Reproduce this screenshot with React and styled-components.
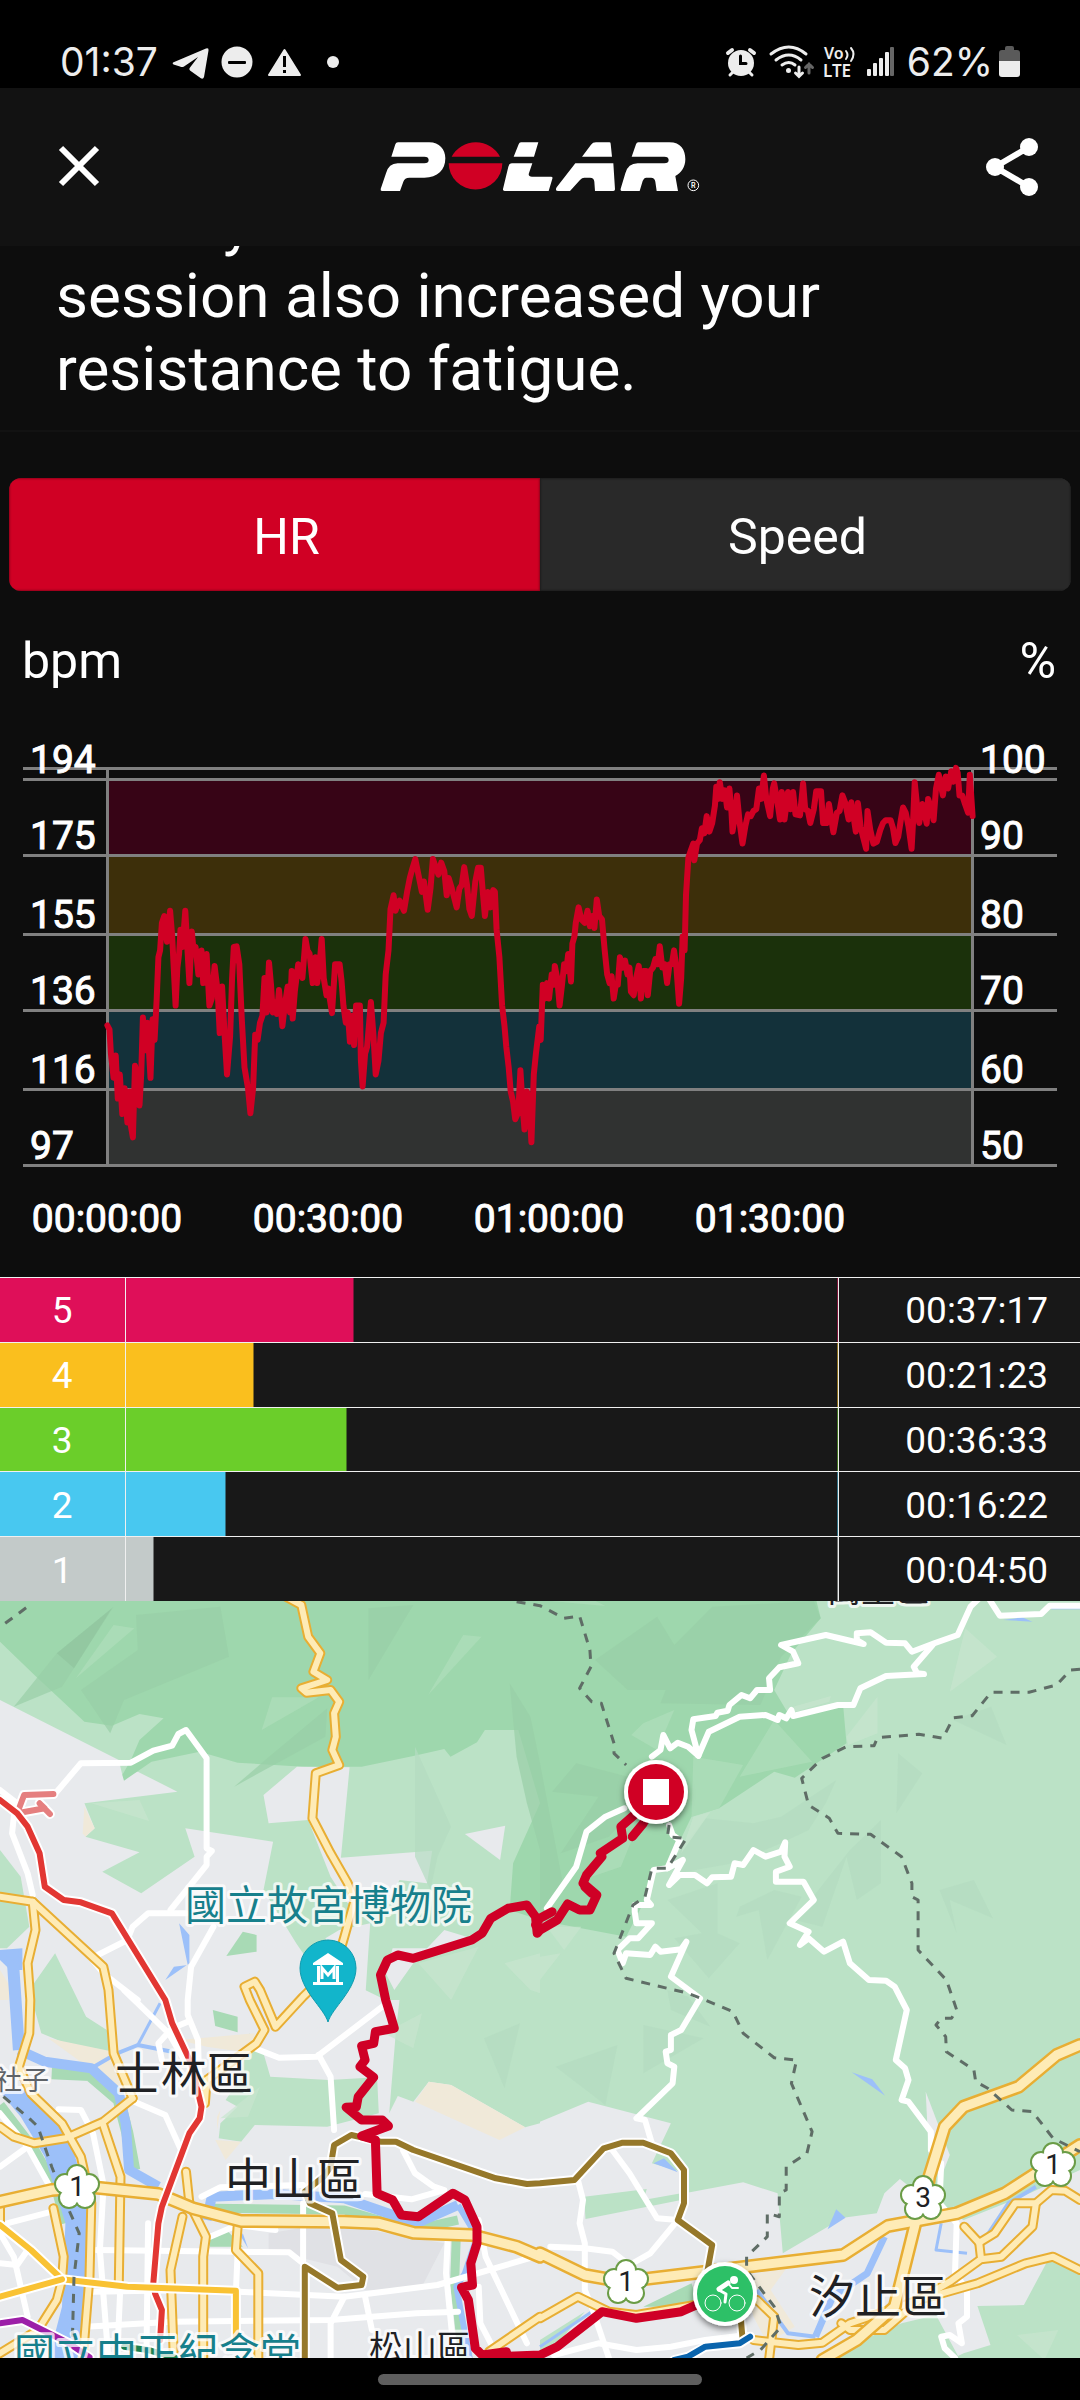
import React, { useState } from "react";
import styled, { createGlobalStyle } from "styled-components";

const GlobalStyle = createGlobalStyle`
  * { box-sizing: border-box; }
  body {
    margin: 0;
    background: #000;
    color: #fff;
    font-family: Roboto, "Noto Sans CJK TC", sans-serif;
  }
  button { font: inherit; color: inherit; border: 0; background: none; cursor: pointer; }
`;

const Screen = styled.main`
  display: flex;
  flex-direction: column;
  min-height: 100vh;
  background: #0d0d0d;
`;

/* ---------- status bar ---------- */

const StatusBar = styled.div`
  display: flex;
  align-items: flex-end;
  justify-content: space-between;
  height: 88px;
  padding: 0 60px 6px;
  background: #000;
  color: #ededed;
  font-family: Inter, sans-serif;
  font-size: 39px;
  line-height: 40px;
`;

const StatusGroup = styled.div`
  display: flex;
  align-items: center;
  gap: ${(p) => p.$gap}px;
  height: 40px;
`;

const Glyph = styled.svg`
  display: block;
  flex: none;
  overflow: visible;
`;

/* ---------- header ---------- */

const Header = styled.header`
  display: flex;
  align-items: center;
  justify-content: space-between;
  height: 158px;
  padding: 0 36px 0 52px;
  background: #121212;
`;

const IconButton = styled.button`
  display: flex;
  padding: 0;
`;

/* ---------- training benefit ---------- */

const Summary = styled.section`
  display: flex;
  align-items: flex-end;
  height: 186px;
  padding: 0 56px 25px;
  overflow: hidden;
  border-bottom: 2px solid #121212;
`;

const SummaryText = styled.p`
  margin: 0;
  font-size: 62px;
  line-height: 73px;
`;

/* ---------- tabs and units ---------- */

const Tabs = styled.div`
  display: grid;
  grid-template-columns: 1fr 1fr;
  margin: 46px 9px 0;
  height: 113px;
  border-radius: 12px;
  overflow: hidden;
  background: #292929;
`;

const Tab = styled.button`
  padding: 4px 0 0;
  font-size: 50px;
  background: ${(p) => (p.$active ? "#d00024" : "#292929")};
  box-shadow: inset 0 0 2px 1px rgba(0, 0, 0, 0.3);
  &:first-child { padding-left: 24px; }
  &:last-child { padding-right: 16px; }
`;

const Units = styled.div`
  display: flex;
  align-items: center;
  justify-content: space-between;
  height: 139px;
  padding: 0 24px 0 22px;
  font-size: 50px;
`;

const Chart = styled.svg`
  display: block;
  width: 100%;
  height: auto;
  font-size: 39px;
  text {
    fill: #fff;
    stroke: #fff;
    stroke-width: 1px;
  }
`;

/* ---------- zones ---------- */

const ZoneTable = styled.table`
  width: 100%;
  height: 324px;
  table-layout: fixed;
  border-collapse: collapse;
  background: #181818;
  font-size: 37px;
  tr { border-top: 1px solid #f0f0f0; }
  th, td { padding: 2px 0 0; }
`;

const ZoneName = styled.th`
  width: 125px;
  font-weight: 400;
  background: ${(p) => p.$color};
  border-right: 1px solid #f0f0f0;
`;

const ZoneBar = styled.td`
  border-right: 1px solid #f0f0f0;
  background: linear-gradient(to right, ${(p) => p.$color} ${(p) => p.$share}%, transparent 0);
`;

const ZoneTime = styled.td`
  width: 242px;
  && { padding-right: 32px; }
  text-align: right;
`;

/* ---------- map ---------- */

const Map = styled.svg`
  display: block;
  width: 100%;
  height: auto;
  background: #e8eaed;
`;

const Place = styled.text`
  font-family: "Noto Sans CJK TC", sans-serif;
  font-size: ${(p) => p.$size}px;
  fill: ${(p) => p.$color || "#202124"};
  stroke: rgba(255, 255, 255, 0.75);
  stroke-width: 6px;
  stroke-linejoin: round;
  paint-order: stroke;
`;

const NavBar = styled.nav`
  display: flex;
  justify-content: center;
  align-items: center;
  flex: 1;
  min-height: 42px;
  background: #000;
`;

const HomeHandle = styled.button`
  width: 30%;
  height: 11px;
  padding: 0;
  border-radius: 6px;
  background: #5e5e5e;
`;

/* ---------- data ---------- */

const ZONES = [
  { name: "5", color: "#df0f59", share: 32, time: "00:37:17" },
  { name: "4", color: "#fabf1e", share: 18, time: "00:21:23" },
  { name: "3", color: "#6bce2a", share: 31, time: "00:36:33" },
  { name: "2", color: "#48c8f0", share: 14, time: "00:16:22" },
  { name: "1", color: "#c3cac9", share: 4, time: "00:04:50" },
];

const BANDS = [
  { y: 49, h: 77, color: "#370416" },
  { y: 126, h: 78, color: "#3d2f0a" },
  { y: 204, h: 77, color: "#1b310b" },
  { y: 281, h: 78, color: "#13313a" },
  { y: 359, h: 77, color: "#303231" },
];

const GRID = [38, 49, 125, 204, 280, 359, 435];

const AXIS = [
  { y: 43, bpm: "194", pct: "100" },
  { y: 119, bpm: "175", pct: "90" },
  { y: 198, bpm: "155", pct: "80" },
  { y: 274, bpm: "136", pct: "70" },
  { y: 353, bpm: "116", pct: "60" },
  { y: 429, bpm: "97", pct: "50" },
];

const TIMES = [
  { x: 107, label: "00:00:00" },
  { x: 328, label: "00:30:00" },
  { x: 549, label: "01:00:00" },
  { x: 770, label: "01:30:00" },
];

const HR_LEFT =
  "312,858 318,870 322,940 330,1010 336,945 342,1070 348,1000 355,1115 362,1040 370,1140 377,1050 380,1150 386,1183 392,975 398,1000 405,1090 410,1000 415,835 422,930 428,850 437,1010 443,840 449,900 455,780 460,660 465,640 470,560 477,540 485,615 494,525 500,600 510,800 515,690 520,650 524,580 530,630 538,525 545,650 550,735 557,585 563,650 568,630 576,710 585,640 590,735 600,650 608,800 615,780 623,685 632,760 638,880 645,745 652,880 659,1000 668,890 674,720 679,630 687,628 695,680 702,840 710,980 720,1040 727,1113 735,1040 741,885 748,900 755,850 762,830 768,720 774,820 781,675 787,740 792,820 799,790 804,825 810,755 820,860 827,800 835,745 842,820 847,700 850,838 856,760 866,680 878,720 887,607 893,640 899,650 908,735 916,660 921,735 928,680 934,607 940,720 948,770 953,750 964,822 973,680 986,680 992,730 997,800 1004,850 1010,820 1016,905 1023,830 1028,915 1034,800 1045,800 1048,960 1053,1035 1060,940 1066,920 1077,790 1084,880 1091,1000 1099,960 1106,880 1114,850 1120,710 1128,640 1134,520 1143,480 1148,525 1160,495 1173,525 1182,470 1190,430 1198,400 1206,375 1215,420 1225,470 1231,440 1242,522 1250,460 1257,375 1266,400 1273,420 1281,385 1290,410 1297,480 1303,430 1312,460 1326,515 1334,460 1341,450 1348,398 1356,450 1363,520 1370,540 1380,440 1388,400 1396,400 1402,470 1408,540 1416,470 1424,515 1432,465 1437,470 1442,580 1450,660 1458,800 1465,860 1470,920 1477,980 1483,1050 1490,1080 1496,1130 1505,1110 1511,988 1518,1100 1523,1160 1530,1050 1537,1090 1543,1197 1550,1000 1556,940 1566,860";
const HR_RIGHT =
  "2,900 8,740 14,780 20,735 26,780 34,710 40,740 43,685 50,720 57,800 64,740 70,680 76,700 82,650 90,730 94,620 100,600 104,560 112,515 120,550 130,560 138,525 145,570 152,540 158,575 165,492 172,540 180,550 188,640 195,710 202,735 208,715 214,780 220,740 226,740 232,660 240,690 247,670 254,710 260,690 264,760 272,770 279,720 287,685 293,780 300,700 308,700 313,770 320,700 328,690 335,665 342,680 348,628 355,690 362,680 369,735 376,680 383,680 389,640 396,690 404,795 410,720 414,600 420,640 424,480 431,370 438,350 445,330 448,378 456,330 464,320 470,285 477,300 484,250 492,295 500,270 508,220 512,165 518,200 522,152 530,200 537,175 543,225 550,170 556,240 559,295 566,250 572,190 580,270 588,330 596,280 604,245 612,250 620,235 628,230 636,170 642,200 650,132 657,200 668,250 676,170 680,155 688,200 697,260 702,180 710,260 720,180 727,230 735,180 742,245 755,248 764,155 770,230 778,235 785,270 795,230 802,178 816,178 822,270 832,270 839,215 846,260 852,297 862,240 870,235 878,190 886,210 896,260 904,210 911,255 917,295 923,212 931,280 938,310 947,345 951,235 959,290 968,330 978,325 988,290 996,270 1004,262 1018,262 1025,285 1032,328 1040,310 1048,260 1054,225 1062,240 1070,280 1079,345 1083,270 1088,152 1095,220 1101,270 1110,215 1116,240 1123,272 1127,200 1135,225 1143,262 1150,170 1158,130 1164,160 1170,190 1178,135 1185,170 1194,120 1200,150 1208,110 1213,125 1218,190 1226,190 1234,215 1243,240 1248,130 1256,250";

const SAMPLE_STEP = 540 / 1568;

const toPlot = (samples, origin) =>
  samples
    .split(" ")
    .map((s) => s.split(",").map(Number))
    .map(([x, y]) => `${(origin + x * SAMPLE_STEP).toFixed(1)},${(y * SAMPLE_STEP).toFixed(1)}`)
    .join(" ");

const HEART_RATE = `${toPlot(HR_LEFT, 0)} ${toPlot(HR_RIGHT, 540)}`;

/* Map geometry is kept per tile; a tile name in a list switches the origin. */
const TILES = { nw: [0, 0], ne: [540, 0], sw: [0, 400], se: [540, 400] };

const trace = (list) => {
  let origin = TILES.nw;
  let x = null;
  const out = [];
  list.split(" ").forEach((token) => {
    if (TILES[token]) {
      origin = TILES[token];
    } else if (x === null) {
      x = Number(token);
    } else {
      out.push(`${(origin[0] + x * SAMPLE_STEP).toFixed(1)},${(origin[1] + Number(token) / 3).toFixed(1)}`);
      x = null;
    }
  });
  return out.join(" ");
};

const WOODS = "#bbe2c6";
const FOREST = "#9ed7ad";
const PARK = "#a8dab5";
const SAND = "#f0e9d9";
const WATER = "#9cc0f9";
const LAND = "#e8eaed";

const AREAS = [
  [WOODS, "nw 0 0 0 330 345 510 355 555 400 545 515 605 245 640 275 715 248 740 405 787 297 845 410 910 565 800 538 715 793 755 765 900 860 1060 940 1180 1060 1200 1120 1230 sw 1160 30 1150 120 1130 370 1155 318 1200 335 1245 275 1310 285 1525 412 1568 400 se 0 395 140 335 380 400 325 520 410 545 420 610 590 577 690 610 705 790 880 683 978 670 1000 610 1045 567 1110 620 1230 690 1400 620 1568 540 ne 1568 0"],
  [WOODS, "se 1568 850 1480 800 1405 945 1270 948 1308 1065 1230 1090 1190 1110 1568 1110"],
  [WOODS, "se 800 1110 870 1080 1050 1000 1150 975 1220 1110"],
  [WOODS, "nw 0 780 60 860 85 1010 20 1075 0 1075"],
  [WOODS, "sw 85 0 nw 160 1090 sw 250 80 310 120 325 200 215 170 120 130"],
  [WOODS, "sw 695 270 725 130 765 190 785 260 955 270 1095 262 1100 370 950 410 740 405 700 455 635 445 640 400 690 350 655 330"],
  [PARK, "sw 618 60 690 80 690 127 625 108"],
  [PARK, "nw 705 1025 745 1035 745 1085 657 1098"],
  [PARK, "sw 600 740 660 722 705 770 610 770"],
  [WOODS, "se 128 620 310 597 300 630 410 610 410 630 132 687"],
  [PARK, "se 300 950 440 880 460 940 400 950"],
  [WOODS, "se 0 1050 130 965 60 1050 0 1090"],
  [SAND, "sw 1245 275 1310 285 1525 412 1450 450 1205 335"],
  [SAND, "sw 625 450 700 455 655 510"],
  [SAND, "nw 245 650 275 715 248 740 240 730"],
  [SAND, "sw 520 150 740 130 735 170 700 185 600 170"],
  [SAND, "sw 140 145 330 185 375 300 290 290 240 220"],
  [SAND, "sw 630 380 640 360 630 420"],
  [SAND, "se 590 860 640 850 740 800 670 900 740 1010 660 1060 620 980"],
  [SAND, "nw 0 1140 30 1190 25 1230 0 1230"],
  ["#e0e1e5", "sw 780 730 960 700 1290 760 1220 900 1060 900 980 830 780 780"],
  [FOREST, "nw 0 0 0 155 100 255 245 395 325 407 405 372 475 385 405 450 380 510 355 555 360 572 440 515 580 485 690 518 880 530 1050 530 1200 498 1290 477 1308 500 1385 457 1408 420 1505 420 1568 640 1490 820 1480 960 1568 990 ne 70 1005 250 1040 300 940 330 850 370 830 440 680 520 655 680 545 740 563 890 460 880 345 720 370 680 300 730 190 815 85 795 0"],
  [LAND, "nw 862 530 1015 532 990 803 1255 782 1240 880 1160 870 1130 930 1010 940 960 860 895 690 780 700 765 615"],
  [LAND, "nw 1350 732 1467 707 1452 810"],
  [LAND, "nw 1290 1020 1355 1040 1200 1120 1145 1200 1120 1150 1140 1075 1240 1075"],
  [LAND, "nw 945 1045 985 1020 1075 1000 1060 1230 1100 1230 sw 1100 60 900 120 nw 1040 1230"],
  [LAND, "se 1120 305 1190 495 1165 560 1130 520"],
];

const FACETS = [
  ["#98cfa7", "nw 395 75 640 50 665 200 360 330 320 430 235 300 400 180"],
  ["#98cfa7", "nw 165 190 330 50 180 290 40 350"],
  ["#90c59e", "nw 165 190 325 55 215 235"],
  ["#98cfa7", "nw 1070 55 1200 45 1070 270"],
  ["#98cfa7", "nw 950 355 945 440 680 590 770 510"],
  ["#98cfa7", "nw 1480 280 1540 380 1568 520 1568 780 1530 640 1500 500"],
  ["#98cfa7", "ne 160 210 340 80 390 165 500 50 795 33 815 85 700 200 640 345 350 340 365 300 255 300"],
  ["#98cfa7", "ne 35 605 105 520 255 560 270 660 200 740 60 790 170 620"],
  ["#98cfa7", "ne 0 520 70 900 0 960"],
  ["#afdeba", "nw 330 105 390 115 220 265"],
  ["#afdeba", "nw 790 322 925 322 760 420"],
  ["#afdeba", "nw 1345 135 1398 140 1243 315"],
  ["#afdeba", "ne 445 500 590 525 520 655 440 680"],
  ["#afdeba", "ne 580 560 680 390 790 515"],
  ["#afdeba", "ne 300 400 390 360 340 480 265 435"],
  ["#afdeba", "ne 30 33 100 0 190 48"],
  ["#afdeba", "ne 170 780 270 740 235 830 150 860"],
  ["#b4dbc0", "ne 480 685 620 700 700 680 860 570 830 640 780 720 700 760 560 820 400 850 370 830"],
  ["#b4dbc0", "ne 990 690 990 880 920 930 890 800 820 1010 740 990 900 780"],
  ["#b4dbc0", "ne 580 950 680 900 760 920 660 1110 635 960 570 980"],
  ["#b4dbc0", "ne 370 930 515 880 515 1030 580 1060 490 1165 390 1045 470 1030"],
  ["#b4dbc0", "ne 1040 490 1110 550 1035 670"],
  ["#b4dbc0", "ne 1160 900 1260 870 1315 985 1190 930 1210 1030"],
  ["#b4dbc0", "ne 1200 390 1310 350 1355 465"],
  ["#b4dbc0", "nw 1205 470 1310 710 1270 800 1250 900 1205 800"],
  ["#b4dbc0", "sw 1405 145 1510 100 1465 295"],
  ["#b4dbc0", "se 45 230 225 165 190 345"],
  ["#b4dbc0", "se 300 105 475 145 300 250"],
  ["#b4dbc0", "se 370 0 430 20 495 110 380 60"],
  ["#c8e6cf", "ne 1235 115 1327 200 1190 305"],
  ["#c8e6cf", "ne 980 320 980 430 895 465 890 440"],
  ["#c8e6cf", "ne 735 350 845 318 840 335 740 365"],
  ["#c8e6cf", "ne 445 680 495 665 410 790"],
  ["#c8e6cf", "nw 1215 1120 1390 1070 1310 1230"],
  ["#c8e6cf", "nw 1465 1120 1568 1090 1568 1210 1540 1200"],
  ["#c8e6cf", "ne 20 1010 120 1010 70 1080"],
  ["#c8e6cf", "ne 0 1100 60 1090 0 1170"],
  ["#c8e6cf", "sw 1115 130 1225 70 1200 175"],
  ["#c8e6cf", "sw 640 385 755 290 720 380"],
  ["#c8e6cf", "nw 265 640 405 630 433 693"],
  ["#c8e6cf", "se 1385 1035 1505 1020 1465 1110"],
];

const BANKS = [
  [10, "sw 0 345 100 480 165 600 190 700"],
  [12, "sw 150 250 260 255 345 330 370 430 390 540"],
  [9, "sw 620 655 1000 660 1200 720 1330 690"],
  [9, "sw 1325 740 1320 880 1345 1110"],
];

const RIVERS = [
  [12, "nw 35 1080 45 1230 sw 55 180"],
  [10, "sw 55 180 130 215 265 235 345 310 365 400 375 540 460 590"],
  [4, "sw 265 235 340 190 400 165 500 185"],
  [3, "sw 400 165 465 40"],
  [10, "sw 600 690 615 620 800 612 1000 625 1210 700 1330 645"],
  [6, "sw 1330 645 1385 740 1350 850 1325 890 1365 1110"],
  [7, "se 800 1040 850 920 950 850 1000 740"],
  [4, "se 630 900 720 1030 800 1040"],
  [3, "se 0 1070 150 965"],
  [3, "se 1240 790 1150 780 1165 700"],
  [4, "se 1270 780 1360 640 1440 590"],
];

const LAKES = [
  "nw 0 1080 65 1075 65 1140 30 1140 0 1110",
  "sw 0 305 75 300 200 430 255 640 250 850 235 1110 140 1110 180 950 190 700 130 500 60 380",
  "se 905 247 965 268 1002 317",
  "se 330 520 360 505 400 547",
  "se 835 718 860 658 887 683",
  "nw 520 1000 550 1035 550 1120 480 1170 505 1130 545 1125",
  "ne 1345 90 1400 82 1430 95",
  "ne 1485 53 1568 53 1568 58 1485 58",
  "sw 705 730 720 775 700 740",
];

const STREETS = [
  "nw 165 605 235 520 380 518 445 482 500 467 518 432 540 420 600 505 600 775 615 783 600 800 600 825 495 960",
  "nw 0 600 50 640",
  "nw 40 680 35 730 80 850 95 915",
  "nw 540 970 430 970 385 1010 370 1050 265 1105",
  "nw 265 1105 300 1150 400 1230 sw 360 0 490 130 540 220",
  "nw 620 1010 555 1130 545 1230 sw 545 75 575 150 580 330",
  "sw 545 95 500 115 460 160 470 210",
  "sw 740 175 810 203 920 200 1110 50",
  "sw 925 195 960 260 970 420",
  "sw 170 358 235 360 270 430 300 580",
  "sw 390 335 480 375 530 490",
  "sw 0 530 80 470 0 370",
  "sw 80 470 150 600",
  "sw 1170 480 1205 550 1260 590 1290 600 1195 628 1060 612",
  "sw 585 620 640 592 880 585",
  "sw 280 780 840 787 880 820",
  "sw 270 905 560 900 690 905 1000 920 1270 885 1568 795",
  "sw 880 640 880 900",
  "sw 610 740 690 705 800 720",
  "sw 690 790 685 905",
  "sw 250 1010 500 995 960 990 1210 970 1330 965",
  "sw 1000 920 960 1000 960 1110",
  "sw 1060 920 1080 1020",
  "sw 300 600 290 780 315 1110",
  "sw 350 880 340 1110",
  "sw 430 700 425 1110",
  "sw 0 820 50 825 80 780",
  "sw 0 730 40 800 80 980",
  "sw 20 700 150 665",
  "sw 1300 750 1295 850 1320 1110",
  "sw 1390 690 1410 800 1530 1060",
  "sw 1390 890 1395 1000 1430 1070",
  "ne 325 500 350 480 358 435 378 475 400 458 430 470 460 497 440 420 445 388 510 378 515 368 545 362 550 345 585 315 610 325 630 300 668 300 665 265 695 232 750 220 735 185 700 165 830 135 940 162 920 150 920 130 960 127 1005 158 1060 160 1080 185 1145 160 1213 135 1250 50 1280 20",
  "ne 460 497 490 425 580 380 655 375 690 390 695 375 715 385 730 360 735 378 865 345 910 345 930 295 1005 258 1115 252 1095 250 1085 230 1140 165",
  "ne 1300 20 1335 77 1455 72 1480 47 1568 47",
  "ne 245 655 190 680 135 725 105 830 20 955",
  "ne 375 705 385 735 405 750 370 835 330 840 310 930 322 945 275 945 275 965 280 1000 325 1000 285 1045 260 1045 225 1080 240 1120 250 1090 320 1095 335 1070 350 1085 410 1078 425 1055 380 1160 465 1225 se 410 120 380 135 380 180 365 185 370 220 390 230 385 280 280 385 305 390 325 460",
  "ne 370 835 415 810 375 885 405 855 450 855 485 880 500 862 555 860 565 820 590 825 620 780 655 800 700 785 712 757 710 800 725 830 685 845 685 875 765 875 795 930 725 1000 780 1025 755 1065 780 1045 825 1085 880 1055 900 1120 955 1170 1005 1172 1030 1190 1050 1230 se 1065 60 1033 210 1060 235 1070 270 1050 330 1070 335 1135 425 1135 480",
  "se 1165 520 1160 640 1210 700 1205 850 1240 900 1240 980 1215 1000 1225 1060 1190 1035 1165 1040 1175 1075 1205 1104",
  "se 110 570 125 630 115 700 130 760 130 900 150 950 200 1104",
  "se 210 480 260 550 340 685 400 690 320 790 260 825 210 785 130 775 30 770",
  "se 40 1095 170 1060 280 1080 380 1070 480 1050 600 1035",
];

const AVENUES = [
  "nw 830 20 875 45 895 140 930 190 910 245 950 270 875 295 890 308 960 300 985 335 970 370 975 440 965 480 985 525 917 550 907 685 960 790 1010 880 1030 930 1000 1040 980 1110",
  "nw 920 1180 sw 880 20 800 110 755 0 nw 740 1175 710 1190 725 1230 sw 768 120 745 160 600 270 595 340",
  "nw 0 920 95 935 300 1130 sw 315 0 330 190 385 325",
  "nw 95 935 103 1020 80 1120 88 1230 sw 85 130 55 230 90 310 180 400 235 500 265 640 260 860 240 1110",
  "sw 385 325 300 395 190 445 100 460 40 440 0 410",
  "sw 300 405 350 560 345 880",
  "sw 540 545 550 640 598 740 590 800 590 1110",
  "sw 530 680 495 840 505 1110",
  "sw 690 710 685 780 750 850 750 1110",
  "sw 155 655 185 800 180 870 165 930 110 1020 0 1090",
  "sw 0 700 0 640 150 600",
  "se 1568 630 1525 602 1485 600 1440 640 1380 640 1320 730 1275 758 1232 710",
  "se 1440 640 1430 710 1340 800 1280 808 1190 875 1100 930 900 1000 820 1058 750 1065 620 1050",
  "se 1568 840 1490 800 1410 820 1270 880 1100 930 1000 1020 900 1020 875 1000",
  "se 1275 755 1280 800",
  "sw 1420 1085 1568 980 se 0 985 110 920 200 965 280 975 450 945",
  "se 630 930 680 980 665 1110",
];

const HIGHWAYS = [
  "sw 0 635 150 600 270 592 460 612 560 655 700 693 1000 695 1100 700 1200 728 1370 735 1500 770 1568 800 se 0 790 130 855 240 875 480 845 880 795 1010 708 1210 670 1350 610 1568 465",
  "se 1568 165 1500 195 1390 290 1230 350 1175 410 1130 560 1120 630 1090 700 1030 950 920 1050 820 1110",
];

const METRO = [
  ["#e57f7f", "nw 155 612 70 615 50 670 130 655 115 640 145 672"],
  ["#e23733", "nw 0 630 50 670 80 710 115 790 130 890 185 930 235 937 325 970 480 1230 sw 500 100 555 220 585 350 580 385 550 430 470 650 460 700 445 880 450 910 470 960 465 1050"],
  ["#f9c233", "sw 0 705 90 780 180 868 370 890 685 902 685 1040"],
  ["#f9c233", "sw 0 920 180 868"],
  ["#96782a", "sw 885 1110 885 830 980 893 1050 885 1055 860 990 810 965 670 900 640 885 605 940 560 960 530 970 465 1020 435 1105 455 1150 455 1200 480 1440 565 1530 582 se 0 580 100 570 185 475 240 458 300 458 380 490 418 540 418 640 400 690 500 765 485 850 580 950 588 1045"],
  ["#0a64ad", "se 390 1110 430 1100 480 1070 580 1060 610 1040"],
  ["#9c1fa8", "sw 0 1000 65 990 200 1060 260 1102"],
  ["#1d7f4f", "sw 360 1070 430 1080 510 1104"],
];

const BORDERS = [
  "nw 15 100 80 50",
  "nw 1500 35 1568 47 ne 70 85 115 78 145 180 148 230 115 295 150 335 178 340 215 460 215 490 250 525",
  "ne 375 705 370 740 425 745 370 835 325 835 305 920 270 945 215 1090 250 1165 430 1210 se 480 30 560 65 590 130 680 203 745 210 730 280 790 425 775 490 715 530 715 600 695 610 695 680 660 670 660 740 600 800 600 840 680 950 700 1010 640 1080 600 1104",
  "ne 1568 238 1540 240 1500 285 1420 307 1310 307 1255 377 1200 383 1170 445 1100 433 980 443 970 467 890 470 820 505 760 565 780 645 840 685 865 730 960 733 1050 800 1080 880 1080 920 1098 930 1098 1080 1180 1170 1200 1230 se 1210 60 1195 85 1165 85 1150 105 1178 140 1180 185 1260 240 1265 275 1300 295 1370 360 1430 365 1490 445 1568 485",
  "sw 10 320 90 390 110 410 150 530 200 660 230 730 215 860 210 1060",
];

const ROUTES = [
  "ne 290 660 235 710 240 745 175 790 180 800 135 855 125 880 165 915 145 960 115 960 80 942 50 990 0 1020 nw 1560 1030 1555 980 1530 945 1475 955 1425 985 1400 1030 1370 1050 1200 1105 1155 1095 1125 1110 1105 1155 1120 1230 sw 1135 80 1145 115 1090 125 1085 160 1050 168 1060 210 1045 230 1085 262 1040 320 1035 350 1005 352 1050 390 1110 390 1128 408 1050 438 1090 450 1095 610 1140 630 1165 675 1215 680 1315 610 1350 630 1385 710 1385 760 1367 820 1372 885 1340 892 1360 930 1380 1075 1400 1095 1470 1085 1450 1100 1568 1095 se 50 1070 180 965 280 985 410 965 530 910",
  "ne 330 640 300 700 268 740",
  "ne 35 965 0 985 nw 1555 1005",
  "ne 130 890 150 910",
];

const SHIELDS = [
  { x: 77, y: 596, label: "1" },
  { x: 626, y: 691, label: "1" },
  { x: 923, y: 607, label: "3" },
  { x: 1053, y: 574, label: "1" },
];

const PETALS = [
  [0, -11],
  [-12, -2],
  [12, -2],
  [-8, 12],
  [8, 12],
];

/* ---------- drawings ---------- */

const StatusLeftIcons = () => (
  <Glyph width="168" height="32" viewBox="170 46 168 32" aria-hidden="true">
    <path
      fill="#ededed"
      d="M171 62.500 L204 48.500 Q207 47.500 206.500 50.500 L202 77 Q201 80 198.500 78 L188 70.500 Q186.500 69 188 67.500 L196 57 L182 66.500 Q180 67.500 178 66.500 L171.500 64.500 Q170 63.500 171 62.500 Z"
    />
    <circle cx="235" cy="62" r="15.500" fill="#ededed" />
    <rect x="226" y="61" width="18" height="3" rx="1" fill="#000" />
    <path d="M282.500 50 L298 75 H267 Z" fill="#ededed" stroke="#ededed" strokeWidth="2" strokeLinejoin="round" />
    <rect x="281" y="56" width="3" height="11" fill="#000" />
    <rect x="281" y="70" width="3" height="3" fill="#000" />
    <circle cx="331" cy="62" r="6" fill="#ededed" />
  </Glyph>
);

const StatusRightIcons = () => (
  <Glyph width="170" height="34" viewBox="726 45 170 34" aria-hidden="true">
    <g fill="none" stroke="#ededed" strokeLinecap="round">
      <circle cx="742" cy="63" r="13" fill="#ededed" stroke="none" />
      <path d="M729 53 L733 50 M751 50 L755 53" strokeWidth="4" />
      <path d="M734 72 L731 75 M750 72 L753 75" strokeWidth="3" />
      <path d="M741.500 56 V63.500 H747" stroke="#000" strokeWidth="3" />
      <path d="M772 54 Q790 40 807 54 M777 60 Q790 50 802 60 M783 65 Q790 60 796 65" strokeWidth="3" />
      <circle cx="789.500" cy="70.500" r="2.500" fill="#ededed" stroke="none" />
      <path d="M800 67 V76 M796.500 73 L800 76.500 L803.500 73" strokeWidth="3" />
      <path d="M810 73 V64 M806.500 67.500 L810 64 L813.500 67.500" stroke="#666" strokeWidth="3" />
      <path d="M847 51 Q850 55 847 59 M852 48 Q857 54 852 61" strokeWidth="2" />
    </g>
    <g fill="#ededed" fontFamily="Noto Sans, sans-serif" fontWeight="600">
      <text x="825" y="59" fontSize="16">Vo</text>
      <text x="824" y="77" fontSize="17">LTE</text>
    </g>
    <g fill="#ededed">
      <rect x="868" y="69" width="4" height="7" rx="1" />
      <rect x="874" y="63" width="4" height="13" rx="1" />
      <rect x="880" y="58" width="4" height="18" rx="1" />
      <rect x="886" y="52" width="4" height="24" rx="1" />
      <rect x="891" y="47" width="4" height="29" rx="1" fill="#666" />
    </g>
  </Glyph>
);

const Battery = () => (
  <Glyph width="21" height="32" viewBox="0 0 21 32" aria-hidden="true">
    <path d="M6 4 V2 Q6 0 8 0 H13 Q15 0 15 2 V4 H18 Q21 4 21 7 V16 H0 V7 Q0 4 3 4 Z" fill="#5a5a5a" />
    <path d="M0 15 H21 V28 Q21 31 18 31 H3 Q0 31 0 28 Z" fill="#ededed" />
  </Glyph>
);

const CloseIcon = () => (
  <Glyph width="44" height="54" viewBox="0 0 44 54" aria-hidden="true">
    <path d="M9 8 L45 44 M45 8 L9 44" stroke="#fff" strokeWidth="6" />
  </Glyph>
);

const ShareIcon = () => (
  <Glyph width="60" height="60" viewBox="0 0 60 60" aria-hidden="true">
    <path d="M45 10 L11 30 L45 50" fill="none" stroke="#fff" strokeWidth="6" />
    <circle cx="45" cy="10" r="9" fill="#fff" />
    <circle cx="11" cy="30" r="9" fill="#fff" />
    <circle cx="45" cy="50" r="9" fill="#fff" />
  </Glyph>
);

const PolarLogo = () => (
  <Glyph width="320" height="54" viewBox="32 90 960 162" role="img" aria-label="Polar">
    <g fill="#fff">
      <path d="M86 97 H180 C210 97 228 118 228 145 C228 180 205 203 165 203 H120 Q106 203 102 215 L92 243 H38 Q33 243 34 237 L50 190 Q58 160 85 160 H165 Q178 160 178 150 Q178 140 165 140 H66 L78 103 Q80 97 86 97 Z" />
      <path d="M455 97 H507 L494 140 H433 L448 103 Q450 97 455 97 Z M428 160 H489 L478 192 Q478 200 488 200 H545 Q551 200 549 206 L538 243 H406 Q400 243 401 237 L417 170 Q420 160 428 160 Z" />
      <path d="M665 104 Q670 97 680 97 H720 Q724 97 724 101 L728 140 H638 Z M618 160 H732 L737 238 Q737 243 732 243 H677 L675 215 Q674 203 662 203 H645 Q638 203 632 210 L602 243 H566 Q556 243 562 232 Z" />
      <path d="M807 97 H900 C935 97 948 120 948 148 C948 172 935 190 918 198 L926 243 H862 L858 215 Q856 203 845 203 H830 Q824 203 820 213 L811 243 H760 Q752 243 754 236 L768 190 Q776 160 805 160 H885 Q898 160 898 150 Q898 140 885 140 H787 L800 103 Q802 97 807 97 Z" />
      <text x="965" y="234" fontFamily="Inter, sans-serif" fontSize="21" fontWeight="600">R</text>
    </g>
    <circle cx="972" cy="226" r="16" fill="none" stroke="#fff" strokeWidth="3" />
    <path d="M247 140 A81 78 0 0 1 392 140 Z M238 160 A80 78 0 1 0 399 160 Z" fill="#d00024" />
  </Glyph>
);

const HeartRateChart = () => (
  <Chart viewBox="0 0 1080 547" role="img" aria-label="Heart rate over time">
    {BANDS.map((b) => (
      <rect key={b.y} x="108" y={b.y} width="864" height={b.h} fill={b.color} />
    ))}
    {GRID.map((y) => (
      <rect key={y} x="23" y={y - 1} width="1034" height="3" fill="#808080" />
    ))}
    <rect x="106" y="38" width="3" height="398" fill="#808080" />
    <rect x="971" y="38" width="3" height="398" fill="#808080" />
    <polyline
      points={HEART_RATE}
      fill="none"
      stroke="#d00024"
      strokeWidth="6"
      strokeLinejoin="round"
      strokeLinecap="round"
    />
    {AXIS.map((a) => (
      <g key={a.bpm}>
        <text x="30" y={a.y}>{a.bpm}</text>
        <text x="980" y={a.y}>{a.pct}</text>
      </g>
    ))}
    {TIMES.map((t) => (
      <text key={t.label} x={t.x} y="502" textAnchor="middle">{t.label}</text>
    ))}
  </Chart>
);

const Lines = ({ items, color, width, cap = "round" }) => (
  <g fill="none" stroke={color} strokeWidth={width} strokeLinejoin="round" strokeLinecap={cap}>
    {items.map((d) => (
      <polyline key={d} points={trace(d)} />
    ))}
  </g>
);

const Shield = ({ x, y, label }) => (
  <g>
    {PETALS.map(([dx, dy]) => (
      <circle key={dx} cx={x + dx} cy={y + dy} r="11" fill="#6a9c46" />
    ))}
    {PETALS.map(([dx, dy]) => (
      <circle key={dx} cx={x + dx} cy={y + dy} r="9" fill="#fff" />
    ))}
    <circle cx={x} cy={y} r="13" fill="#fff" />
    <text x={x} y={y + 10} textAnchor="middle" fontSize="28" fill="#202124">{label}</text>
  </g>
);

const RouteMap = () => (
  <Map viewBox="0 11 1080 757" role="img" aria-label="Route map">
    <defs>
      <filter id="drop" x="-30%" y="-30%" width="160%" height="160%">
        <feDropShadow dx="0" dy="3" stdDeviation="3" floodOpacity="0.5" />
      </filter>
    </defs>
    {AREAS.map(([color, d]) => (
      <polygon key={d} points={trace(d)} fill={color} />
    ))}
    {FACETS.map(([color, d]) => (
      <polygon key={d} points={trace(d)} fill={color} opacity="0.7" />
    ))}
    {BANKS.map(([w, d]) => (
      <Lines key={d} items={[d]} color={PARK} width={w} cap="butt" />
    ))}
    {LAKES.map((d) => (
      <polygon key={d} points={trace(d)} fill={WATER} />
    ))}
    {RIVERS.map(([w, d]) => (
      <Lines key={d} items={[d]} color={WATER} width={w} cap="butt" />
    ))}
    <Lines items={STREETS} color="#fff" width={6} />
    <Lines items={AVENUES} color="#e8ae33" width={10} />
    <Lines items={AVENUES} color="#feebb6" width={6} />
    <Lines items={HIGHWAYS} color="#e8ae33" width={14} />
    <Lines items={HIGHWAYS} color="#feebb6" width={9} />
    {METRO.map(([color, d]) => (
      <React.Fragment key={d}>
        <Lines items={[d]} color="#fff" width={10} />
        <Lines items={[d]} color={color} width={6} />
      </React.Fragment>
    ))}
    <g strokeDasharray="9 8">
      <Lines items={BORDERS} color="#5f6d66" width={3} cap="butt" />
    </g>
    {SHIELDS.map((s) => (
      <Shield key={`${s.x}`} {...s} />
    ))}
    <Place x="827" y="12" $size={34}>萬里區</Place>
    <Place x="185" y="330" $size={41} $color="#17808c">國立故宮博物院</Place>
    <Place x="115" y="500" $size={46}>士林區</Place>
    <Place x="225" y="606" $size={46}>中山區</Place>
    <Place x="-5" y="500" $size={27} $color="#5f6368">社子</Place>
    <Place x="369" y="770" $size={34}>松山區</Place>
    <Place x="14" y="778" $size={41} $color="#17808c">國立中正紀念堂</Place>
    <Place x="809" y="723" $size={46}>汐止區</Place>

    <path
      d="M328 432 C324 418 300 400 300 378 A28 28 0 0 1 356 378 C356 400 332 418 328 432 Z"
      fill="#12b5cb"
      stroke="#0f9bae"
      strokeWidth="1"
    />
    <g fill="#fff">
      <path d="M328 363 L343 373 V375 H313 V373 Z M317 376 H320 V392 H317 Z M336 376 H339 V392 H336 Z M313 392 H343 V395 H313 Z" />
      <path d="M322 389 V378 L328 385 L334 378 V389" fill="none" stroke="#fff" strokeWidth="3" />
    </g>

    <Lines items={ROUTES} color="#cf0026" width={9} />

    <g filter="url(#drop)">
      <circle cx="656" cy="202" r="32" fill="#fff" />
      <circle cx="725" cy="704" r="32" fill="#fff" />
    </g>
    <circle cx="656" cy="202" r="28" fill="#d00024" />
    <rect x="643" y="189" width="26" height="26" fill="#fff" />
    <circle cx="725" cy="704" r="28" fill="#2dc067" />
    <g fill="none" stroke="#fff" strokeLinejoin="round" strokeLinecap="round">
      <circle cx="713" cy="713" r="8" strokeWidth="1" />
      <circle cx="737" cy="713" r="8" strokeWidth="1" />
      <path d="M719 699 L728 693" strokeWidth="5" />
      <path d="M728 693 L732 698 L738 698" strokeWidth="2" />
      <path d="M719 700 L726 704 L725 712" strokeWidth="3" />
      <circle cx="734" cy="690" r="4" fill="#fff" stroke="none" />
    </g>
  </Map>
);

/* ---------- page ---------- */

export default function App() {
  const [series, setSeries] = useState("HR");
  return (
    <>
      <GlobalStyle />
      <Screen>
        <StatusBar>
          <StatusGroup $gap={14}>
            <span>01:37</span>
            <StatusLeftIcons />
          </StatusGroup>
          <StatusGroup $gap={12}>
            <StatusRightIcons />
            <StatusGroup $gap={6}>
              <span>62%</span>
              <Battery />
            </StatusGroup>
          </StatusGroup>
        </StatusBar>

        <Header>
          <IconButton aria-label="Close"><CloseIcon /></IconButton>
          <PolarLogo />
          <IconButton aria-label="Share"><ShareIcon /></IconButton>
        </Header>

        <Summary>
          <SummaryText>
            activity. This
            <br />
            session also increased your
            <br />
            resistance to fatigue.
          </SummaryText>
        </Summary>

        <Tabs role="tablist">
          {["HR", "Speed"].map((name) => (
            <Tab
              key={name}
              role="tab"
              aria-selected={series === name}
              $active={series === name}
              onClick={() => setSeries(name)}
            >
              {name}
            </Tab>
          ))}
        </Tabs>

        <Units>
          <span>bpm</span>
          <span>%</span>
        </Units>
        <HeartRateChart />

        <ZoneTable>
          <tbody>
            {ZONES.map((z) => (
              <tr key={z.name}>
                <ZoneName scope="row" $color={z.color}>{z.name}</ZoneName>
                <ZoneBar $color={z.color} $share={z.share} />
                <ZoneTime>{z.time}</ZoneTime>
              </tr>
            ))}
          </tbody>
        </ZoneTable>

        <RouteMap />

        <NavBar>
          <HomeHandle aria-label="Home" />
        </NavBar>
      </Screen>
    </>
  );
}
